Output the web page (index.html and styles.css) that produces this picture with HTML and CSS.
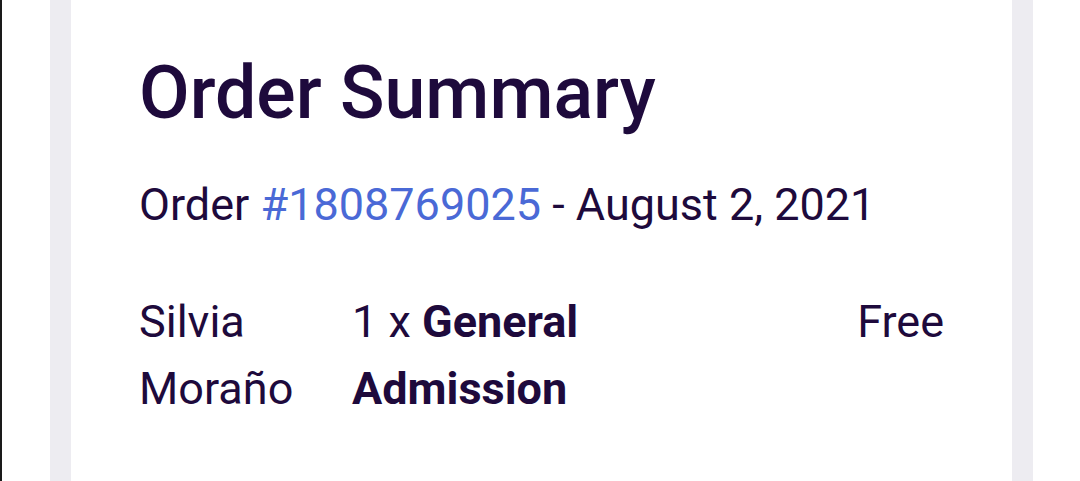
FILE: index.html
```html
<!DOCTYPE html>
<html lang="en">
<head>
  <meta charset="utf-8">
  <meta name="viewport" content="width=device-width, initial-scale=1">
  <title>Order Summary</title>
  <link rel="stylesheet" href="styles.css">
</head>
<body>

  <div class="screen">
    <div class="summaryCard">

      <h1 class="summaryTitle">Order Summary</h1>

      <p class="orderMeta">
        Order <a class="orderLink" href="#">#1808769025</a> - August 2, 2021
      </p>

      <div class="orderRow">
        <div class="attendee">Silvia Moraño</div>
        <div class="ticket">1 x <strong>General Admission</strong></div>
        <div class="price">Free</div>
      </div>

    </div>
  </div>

</body>
</html>
```

FILE: styles.css
```css
html, body {
  margin: 0;
  height: 100vh;
  overflow: hidden;
}

body {
  background: white;
  font-family: Roboto, "Liberation Sans", sans-serif;
  color: #1e0a3c;
}

.screen {
  height: 100vh;
  border-left: 2px solid #1a1a1a;
  padding: 0 47px 0 48px;
  box-sizing: border-box;
}

.summaryCard {
  height: 100%;
  box-sizing: border-box;
  background: white;
  border-left: 21px solid #edecf1;
  border-right: 21px solid #edecf1;
  padding: 49px 68px 0;
}

.summaryTitle {
  margin: 0;
  font-size: 73.5px;
  font-weight: 500;
  line-height: 88px;
}

.orderMeta {
  margin: 41px 0 0;
  font-size: 45px;
  line-height: 54px;
}

.orderLink {
  color: #4a69d6;
  text-decoration: none;
}

.orderRow {
  display: grid;
  grid-template-columns: 213px 1fr 1fr;
  margin-top: 56px;
  font-size: 45px;
  line-height: 67px;
}

.ticket strong {
  font-weight: 700;
}

.price {
  text-align: right;
}
```
